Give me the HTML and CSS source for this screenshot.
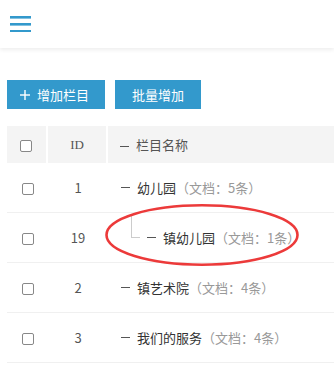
FILE: index.html
```html
<!DOCTYPE html>
<html lang="zh-CN">
<head>
<meta charset="utf-8">
<title>栏目管理</title>
<link rel="stylesheet" href="styles.css">
</head>
<body>
<header class="topbar">
  <svg class="menu-icon" width="21" height="16" viewBox="0 0 21 16" aria-hidden="true">
    <rect x="0" y="0" width="21" height="2.6" fill="#3399cc"/>
    <rect x="0" y="7" width="21" height="2.6" fill="#3399cc"/>
    <rect x="0" y="14" width="21" height="2.6" fill="#3399cc"/>
  </svg>
</header>

<div class="toolbar">
  <button class="btn btn-add">
    <svg class="plus" width="10" height="10" viewBox="0 0 10 10" aria-hidden="true">
      <rect x="4.3" y="0" width="1.4" height="10" fill="#fff"/>
      <rect x="0" y="4.3" width="10" height="1.4" fill="#fff"/>
    </svg>
    <span>增加栏目</span>
  </button>
  <button class="btn btn-batch">批量增加</button>
</div>

<div class="table-wrap">
  <table class="list">
    <colgroup>
      <col class="c-check">
      <col class="c-id">
      <col>
    </colgroup>
    <thead>
      <tr>
        <th><input type="checkbox" class="chk"></th>
        <th class="id">ID</th>
        <th class="name"><span class="dash"></span>栏目名称</th>
      </tr>
    </thead>
    <tbody>
      <tr>
        <td><input type="checkbox" class="chk"></td>
        <td class="id">1</td>
        <td class="name"><div class="name-in"><span class="dash"></span>幼儿园<span class="count">（文档：5条）</span></div></td>
      </tr>
      <tr>
        <td><input type="checkbox" class="chk"></td>
        <td class="id">19</td>
        <td class="name"><div class="name-in"><span class="branch"></span><span class="dash"></span>镇幼儿园<span class="count">（文档：1条）</span></div></td>
      </tr>
      <tr>
        <td><input type="checkbox" class="chk"></td>
        <td class="id">2</td>
        <td class="name"><div class="name-in"><span class="dash"></span>镇艺术院<span class="count">（文档：4条）</span></div></td>
      </tr>
      <tr>
        <td><input type="checkbox" class="chk"></td>
        <td class="id">3</td>
        <td class="name"><div class="name-in"><span class="dash"></span>我们的服务<span class="count">（文档：4条）</span></div></td>
      </tr>
    </tbody>
  </table>
  <svg class="mark" width="200" height="66" viewBox="0 0 200 66" aria-hidden="true">
    <ellipse cx="98" cy="31" rx="95.5" ry="29.7" fill="none" stroke="#ec3a3a" stroke-width="2.6"/>
  </svg>
</div>
</body>
</html>
```

FILE: styles.css
```css
html, body {
  margin: 0;
  padding: 0;
  background: #fff;
  overflow: hidden;
}

body {
  font-family: "Noto Sans CJK SC", "Noto Sans", "Liberation Sans", sans-serif;
  font-size: 13px;
  color: #333;
}

.topbar {
  height: 48px;
  display: flex;
  align-items: center;
  padding-left: 10px;
  background: #fff;
  box-shadow: 0 2px 4px rgba(0, 0, 0, 0.07);
}

.menu-icon {
  display: block;
}

.toolbar {
  display: flex;
  gap: 10px;
  padding: 32px 0 0 7px;
}

.btn {
  height: 29px;
  border: 0;
  margin: 0;
  padding: 0;
  background: #3399cc;
  color: #fff;
  font-family: inherit;
  font-size: 13px;
  display: flex;
  align-items: center;
  justify-content: center;
  line-height: 1;
}

.btn-add {
  width: 98px;
  gap: 7px;
  justify-content: flex-start;
  padding-left: 13px;
}

.btn-batch {
  width: 86px;
}

.plus {
  display: block;
}

.table-wrap {
  position: relative;
  margin: 17px 0 0 7px;
}

.list {
  width: 100%;
  table-layout: fixed;
  border-collapse: separate;
  border-spacing: 0;
}

.c-check {
  width: 41px;
}

.c-id {
  width: 60px;
}

.list th {
  height: 37px;
  padding: 0;
  background: #f4f4f4;
  border-right: 2px solid #fff;
  font-weight: normal;
  color: #555;
  box-sizing: border-box;
}

.list th:last-child {
  border-right: 0;
}

.list td {
  height: 50px;
  padding: 0;
  border-bottom: 1px solid #f0f0f0;
  box-sizing: border-box;
}

.list th:first-child,
.list td:first-child {
  text-align: center;
}

.chk {
  appearance: none;
  -webkit-appearance: none;
  width: 12px;
  height: 12px;
  margin: 0;
  border: 1px solid #888;
  border-radius: 2px;
  background: #fff;
  vertical-align: middle;
  box-sizing: border-box;
}

.list th:first-child .chk {
  margin-left: -1px;
}

.id {
  text-align: center;
  color: #555;
}

.list th.id {
  font-family: "Liberation Serif", serif;
  font-size: 13px;
}

.list th.name {
  text-align: left;
  padding-left: 12px;
  color: #555;
}

.list td.name {
  padding-left: 13px;
  white-space: nowrap;
}

.name-in {
  display: flex;
  align-items: center;
}

.dash {
  display: inline-block;
  width: 9px;
  height: 1px;
  background: #555;
  margin-right: 7px;
  vertical-align: middle;
}

.branch {
  display: inline-block;
  width: 9px;
  height: 23px;
  margin: 0 7px 23px 10px;
  border-left: 1px solid #ccc;
  border-bottom: 1px solid #ccc;
  box-sizing: border-box;
}

.count {
  color: #999;
}

.mark {
  position: absolute;
  left: 97px;
  top: 78px;
}
```
